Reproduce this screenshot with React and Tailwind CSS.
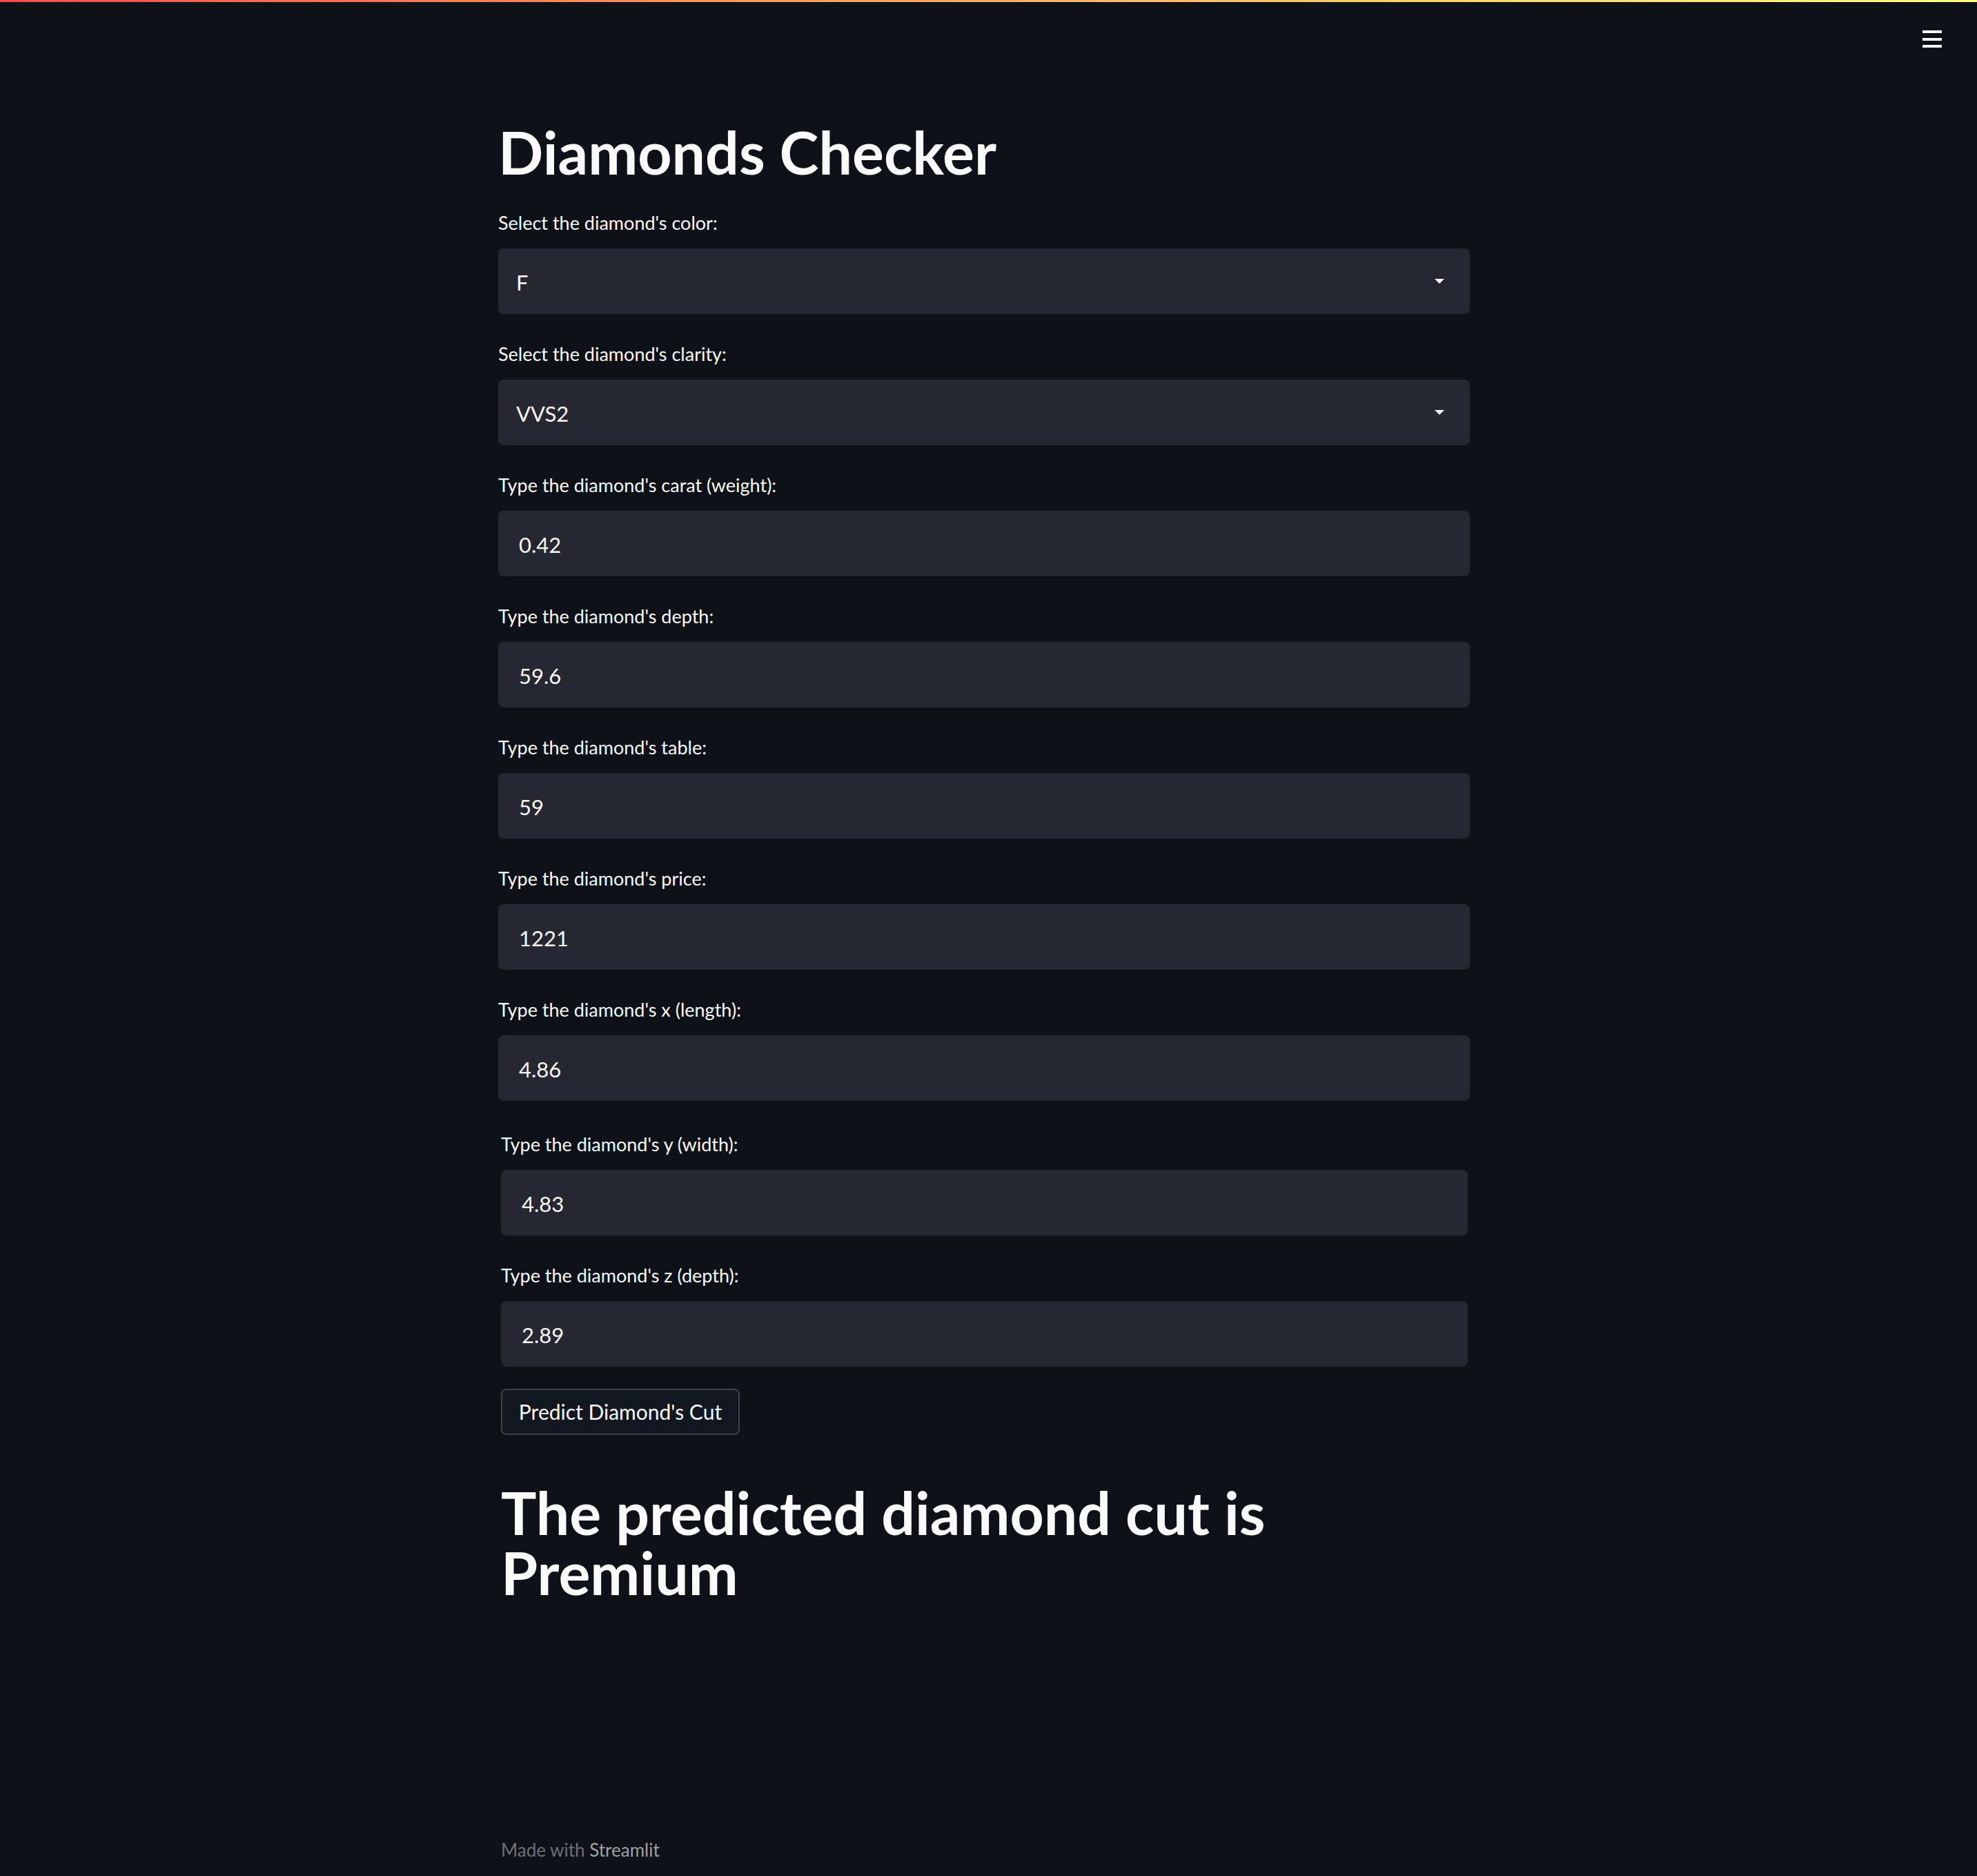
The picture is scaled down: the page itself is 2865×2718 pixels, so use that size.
import React from "react";

// fields above the inset block
const mainFields = [
  { label: "Select the diamond's color:", value: "F", select: true },
  { label: "Select the diamond's clarity:", value: "VVS2", select: true },
  { label: "Type the diamond's carat (weight):", value: "0.42" },
  { label: "Type the diamond's depth:", value: "59.6" },
  { label: "Type the diamond's table:", value: "59" },
  { label: "Type the diamond's price:", value: "1221" },
  { label: "Type the diamond's x (length):", value: "4.86" },
];

const sideFields = [
  { label: "Type the diamond's y (width):", value: "4.83" },
  { label: "Type the diamond's z (depth):", value: "2.89" },
];

const Field = ({ label, value, select }) => (
  <div className="flex flex-col">
    <div className="h-[48px] flex items-center pt-[5px] text-[27px]">{label}</div>
    <div
      className={
        select
          ? "mt-[15px] h-[95px] rounded-[8px] bg-[#262730] flex items-center justify-between pl-[26px] pr-[37px] text-[31px]"
          : "mt-[15px] h-[95px] rounded-[8px] bg-[#262730] flex items-center pl-[30px] text-[31px]"
      }
    >
      <span className="pt-[4px]">{value}</span>
      {select && (
        <svg width="14" height="8" viewBox="0 0 14 8">
          <polygon points="0,0 14,0 7,7" fill="#fafafa" />
        </svg>
      )}
    </div>
  </div>
);

const App = () => {
  return (
    <div className="h-[2718px] overflow-hidden bg-[#0e1117] text-[#fafafa] font-['Lato','Noto_Sans',sans-serif] flex flex-col">
      {/* top decoration */}
      <div className="h-[3px] bg-linear-to-r from-[#ff4b4b] to-[#ffff80]" />

      {/* header */}
      <div className="h-[97px] flex justify-end items-start pt-[41px] pr-[51px]">
        <svg width="28" height="25" viewBox="0 0 28 25">
          <rect x="0" y="0" width="28" height="4" fill="#fafafa" />
          <rect x="0" y="11" width="28" height="4" fill="#fafafa" />
          <rect x="0" y="21" width="28" height="4" fill="#fafafa" />
        </svg>
      </div>

      <div className="flex justify-center pr-[13px] pt-[67px]">
        <div className="w-[1408px] flex flex-col">
          <h1 className="h-[106px] text-[86px] leading-[106px] font-bold">Diamonds Checker</h1>

          <div className="mt-[24px] flex flex-col gap-[32px]">
            {mainFields.map((f, i) => (
              <Field key={i} {...f} />
            ))}

            <div className="mt-[5px] pl-[4px] pr-[3px] flex flex-col">
              <div className="flex flex-col gap-[32px]">
                {sideFields.map((f, i) => (
                  <Field key={i} {...f} />
                ))}

                <button className="w-[346px] h-[67px] rounded-[8px] border-2 border-[#3f424a] bg-[#131720] text-[30px] flex items-center justify-center">
                  Predict Diamond's Cut
                </button>
              </div>

              <h1 className="mt-[68px] text-[86px] leading-[87px] font-bold">
                The predicted diamond cut is Premium
              </h1>

              <div className="mt-[339px] h-[40px] flex items-center text-[26px] text-[#6e7074]">
                Made with&nbsp;<span className="text-[#a0a1a4]">Streamlit</span>
              </div>
            </div>
          </div>
        </div>
      </div>
    </div>
  );
};

export default App;
